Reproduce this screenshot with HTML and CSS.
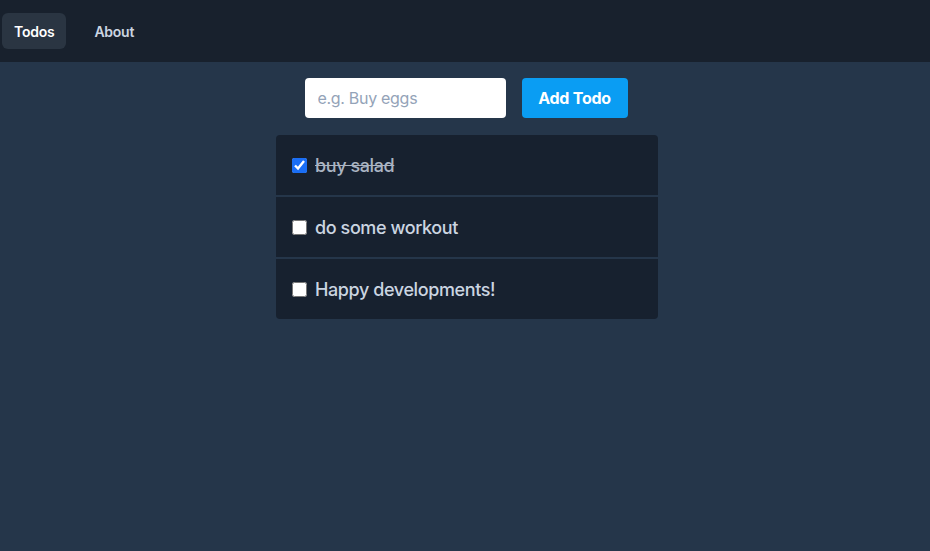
FILE: index.html
```html
<!DOCTYPE html>
<html>
<head>
<meta charset="utf-8">
<link rel="stylesheet" href="styles.css">
</head>
<body>
<nav class="nav">
  <a class="nav-link active">Todos</a>
  <a class="nav-link">About</a>
</nav>
<main class="main">
  <form class="add-form">
    <input class="add-input" type="text" placeholder="e.g. Buy eggs">
    <button class="add-btn" type="button">Add Todo</button>
  </form>
  <ul class="todo-list">
    <li class="todo"><input class="todo-check" type="checkbox" checked><span class="todo-text done">buy salad</span></li>
    <li class="todo"><input class="todo-check" type="checkbox"><span class="todo-text">do some workout</span></li>
    <li class="todo"><input class="todo-check" type="checkbox"><span class="todo-text">Happy developments!</span></li>
  </ul>
</main>
</body>
</html>
```
FILE: styles.css
```css
* { box-sizing: border-box; }
html, body { margin: 0; height: 100%; }
body {
  background: #25364a;
  font-family: Inter, "Liberation Sans", Arial, sans-serif;
  color: #cbd5e1;
}
.nav {
  height: 62px;
  background: #18212d;
  display: flex;
  align-items: center;
  padding: 0 2px;
}
.nav-link {
  display: flex;
  align-items: center;
  height: 36px;
  padding: 0 12px;
  border-radius: 6px;
  font-size: 14px;
  font-weight: 600;
  letter-spacing: -0.25px;
  color: #cbd5e1;
  cursor: pointer;
}
.nav-link.active {
  background: #2a3542;
  color: #ffffff;
}
.nav-link + .nav-link { margin-left: 16px; }
.main {
  display: flex;
  flex-direction: column;
  align-items: center;
  padding-top: 16px;
  padding-left: 2px;
}
.add-form {
  display: flex;
  gap: 16px;
  margin: 0;
}
.add-input {
  width: 201px;
  height: 40px;
  border: none;
  border-radius: 4px;
  padding: 0 13px;
  font-size: 16px;
  letter-spacing: -0.3px;
  font-family: Inter, "Liberation Sans", Arial, sans-serif;
  background: #ffffff;
  color: #1f2937;
  outline: none;
}
.add-input::placeholder { color: #94a3b8; }
.add-btn {
  width: 106px;
  height: 40px;
  border: none;
  border-radius: 4px;
  background: #0a9df3;
  color: #ffffff;
  font-size: 16px;
  font-weight: 700;
  letter-spacing: -0.25px;
  font-family: Inter, "Liberation Sans", Arial, sans-serif;
}
.todo-list {
  list-style: none;
  margin: 17px 0 0 2px;
  padding: 0;
  width: 382px;
  display: flex;
  flex-direction: column;
  gap: 2px;
  background: #25364a;
  border-radius: 4px;
  overflow: hidden;
}
.todo {
  height: 60px;
  background: #17212f;
  display: flex;
  align-items: center;
  padding: 0 16px;
  gap: 8px;
}
.todo-check {
  width: 15px;
  height: 15px;
  margin: 0;
  accent-color: #1a6ef5;
}
.todo-text {
  font-size: 18px;
  font-weight: 500;
  letter-spacing: -0.4px;
  color: #cbd5e1;
}
.todo-text.done {
  text-decoration: line-through;
  color: #aab4c2;
}
```
